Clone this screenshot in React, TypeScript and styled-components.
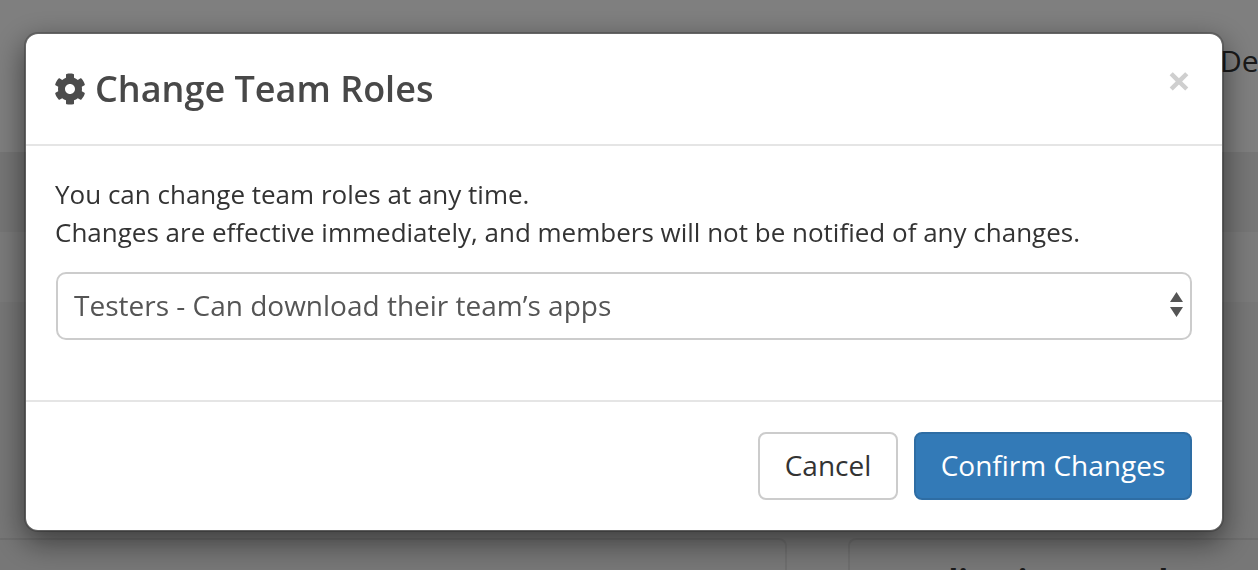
import React from 'react';
import styled, { createGlobalStyle } from 'styled-components';
import { FaCog } from 'react-icons/fa';

const GlobalStyle = createGlobalStyle`
    html, body {
        margin: 0;
        padding: 0;
        height: 100%;
        overflow: hidden;
        font-family: 'Open Sans', 'Liberation Sans', sans-serif;
    }
    * {
        box-sizing: border-box;
    }
`;

const App: React.FC = () => (
    <>
        <GlobalStyle />
        <Page>
            <TopBar>
                <NavItem>Dev</NavItem>
            </TopBar>
            <SubBar />
            <Toolbar />
            <Content>
                <Cards>
                    <Card />
                    <Card>
                        <CardTitle>Application members</CardTitle>
                    </Card>
                </Cards>
            </Content>
        </Page>
        <Overlay>
            <Modal>
                <ModalHeader>
                    <ModalTitle>
                        <FaCog size={32} />
                        Change Team Roles
                    </ModalTitle>
                    <CloseButton>×</CloseButton>
                </ModalHeader>
                <ModalBody>
                    <Intro>
                        You can change team roles at any time.
                        <br />
                        Changes are effective immediately, and members will not be notified of any changes.
                    </Intro>
                    <SelectBox>
                        <SelectLabel>Testers - Can download their team’s apps</SelectLabel>
                        <svg width="13" height="26" viewBox="0 0 13 26">
                            <path d="M6.5 0 L13 10 L0 10 Z M0 15 L13 15 L6.5 25 Z" fill="#555" />
                        </svg>
                    </SelectBox>
                </ModalBody>
                <ModalFooter>
                    <Button>Cancel</Button>
                    <Button primary>Confirm Changes</Button>
                </ModalFooter>
            </Modal>
        </Overlay>
    </>
);

const Page = styled.div`
    width: 1258px;
    height: 570px;
    background: #fff;
    overflow: hidden;
`;

const TopBar = styled.div`
    height: 152px;
    background: #fff;
    display: flex;
    justify-content: flex-end;
    padding-top: 41px;
`;

const NavItem = styled.div`
    width: 38px;
    font-size: 30px;
    line-height: 40px;
    color: #333;
    white-space: nowrap;
`;

const SubBar = styled.div`
    height: 80px;
    background: #ececec;
`;

const Toolbar = styled.div`
    height: 70px;
    background: #f6f6f6;
`;

const Content = styled.div`
    height: 268px;
    background: #eee;
    padding-top: 236px;
`;

const Cards = styled.div`
    display: grid;
    grid-template-columns: 787px 1fr;
    column-gap: 61px;
`;

const Card = styled.div`
    height: 60px;
    border: 2px solid #ddd;
    border-radius: 8px;
    padding: 19px 36px;
    &:first-child {
        border-left: none;
        border-radius: 0 8px 8px 0;
    }
    &:last-child {
        border-right: none;
        border-radius: 8px 0 0 8px;
    }
`;

const CardTitle = styled.div`
    font-size: 32px;
    line-height: 44px;
    font-weight: 700;
    color: #333;
    white-space: nowrap;
`;

const Overlay = styled.div`
    position: fixed;
    inset: 0;
    background: rgba(0, 0, 0, 0.5);
    padding: 32px 34px 38px 24px;
`;

const Modal = styled.div`
    width: 1200px;
    height: 500px;
    background: #fff;
    background-clip: padding-box;
    border: 2px solid rgba(0, 0, 0, 0.2);
    border-radius: 14px;
    box-shadow: 0 10px 30px rgba(0, 0, 0, 0.5);
    display: flex;
    flex-direction: column;
`;

const ModalHeader = styled.div`
    height: 112px;
    border-bottom: 2px solid #e5e5e5;
    padding: 0 30px 0 28px;
    display: flex;
    align-items: flex-start;
    justify-content: space-between;
`;

const ModalTitle = styled.h4`
    margin: 31px 0 0;
    display: flex;
    align-items: center;
    gap: 9px;
    font-size: 36px;
    line-height: 48px;
    font-weight: 600;
    color: #484848;
    svg {
        color: #4c4c4c;
    }
`;

const CloseButton = styled.span`
    margin-top: 23px;
    margin-right: 1px;
    font-size: 42px;
    line-height: 46px;
    font-weight: 700;
    color: #cfcfcf;
`;

const ModalBody = styled.div`
    height: 256px;
    border-bottom: 2px solid #e5e5e5;
    padding: 29px 30px 0 29px;
`;

const Intro = styled.p`
    margin: 0 0 21px;
    font-size: 26px;
    line-height: 38px;
    color: #333;
`;

const SelectBox = styled.div`
    height: 68px;
    margin-left: 1px;
    border: 2px solid #ccc;
    border-radius: 10px;
    padding: 0 7px 2px 16px;
    display: flex;
    align-items: center;
    justify-content: space-between;
`;

const SelectLabel = styled.span`
    font-size: 28px;
    color: #555;
`;

const ModalFooter = styled.div`
    flex: 1;
    padding: 30px 30px 0;
    display: flex;
    justify-content: flex-end;
    align-items: flex-start;
    gap: 16px;
`;

const Button = styled.button<{ primary?: boolean }>`
    height: 68px;
    width: ${p => (p.primary ? '278px' : '140px')};
    padding: 0 0 2px;
    border: 2px solid ${p => (p.primary ? '#2e6da4' : '#ccc')};
    border-radius: 8px;
    background: ${p => (p.primary ? '#337ab7' : '#fff')};
    color: ${p => (p.primary ? '#fff' : '#333')};
    font-family: inherit;
    font-size: 28px;
`;

export default App;
